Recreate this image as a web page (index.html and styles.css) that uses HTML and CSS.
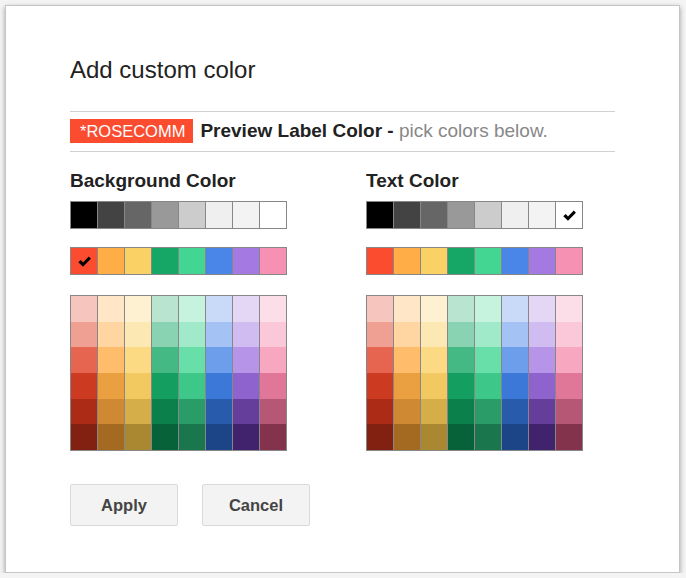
FILE: index.html
```html
<!DOCTYPE html>
<html lang="en">
<head>
    <meta charset="UTF-8">
    <title>Add custom color</title>
    <link rel="stylesheet" href="styles.css">
</head>
<body>
    <div class="dialog">
        <h1 class="title">Add custom color</h1>

        <div class="preview">
            <span class="chip">*ROSECOMM</span>
            <span class="preview-text"><b>Preview Label Color -</b> <span class="hint">pick colors below.</span></span>
        </div>

        <div class="pickers">
            <div class="picker">
                <h2 class="picker-title">Background Color</h2>
                <div class="swatches row">
                    <span style="background:#000000"></span>
                    <span style="background:#434343"></span>
                    <span style="background:#666666"></span>
                    <span style="background:#999999"></span>
                    <span style="background:#cccccc"></span>
                    <span style="background:#efefef"></span>
                    <span style="background:#f3f3f3"></span>
                    <span style="background:#ffffff"></span>
                </div>
                <div class="swatches row spaced">
                    <span class="checked" style="background:#fb4c2f"><svg viewBox="0 0 14 14"><path d="M1.2 7.8 L3.5 5.7 L5.6 8 L11 2.4 L13 4.4 L5.6 11.8 Z"/></svg></span>
                    <span style="background:#ffad47"></span>
                    <span style="background:#fad165"></span>
                    <span style="background:#16a766"></span>
                    <span style="background:#43d692"></span>
                    <span style="background:#4a86e8"></span>
                    <span style="background:#a479e2"></span>
                    <span style="background:#f691b3"></span>
                </div>
                <div class="swatches grid bg-grid"></div>
            </div>

            <div class="picker">
                <h2 class="picker-title">Text Color</h2>
                <div class="swatches row">
                    <span style="background:#000000"></span>
                    <span style="background:#434343"></span>
                    <span style="background:#666666"></span>
                    <span style="background:#999999"></span>
                    <span style="background:#cccccc"></span>
                    <span style="background:#efefef"></span>
                    <span style="background:#f3f3f3"></span>
                    <span class="checked" style="background:#ffffff"><svg viewBox="0 0 14 14"><path d="M1.2 7.8 L3.5 5.7 L5.6 8 L11 2.4 L13 4.4 L5.6 11.8 Z"/></svg></span>
                </div>
                <div class="swatches row spaced">
                    <span style="background:#fb4c2f"></span>
                    <span style="background:#ffad47"></span>
                    <span style="background:#fad165"></span>
                    <span style="background:#16a766"></span>
                    <span style="background:#43d692"></span>
                    <span style="background:#4a86e8"></span>
                    <span style="background:#a479e2"></span>
                    <span style="background:#f691b3"></span>
                </div>
                <div class="swatches grid text-grid"></div>
            </div>
        </div>

        <div class="actions">
            <button class="btn">Apply</button>
            <button class="btn">Cancel</button>
        </div>
    </div>

    <script>
        // label palette, row by row
        const palette = [
            '#f6c5be', '#ffe6c7', '#fef1d1', '#b9e4d0', '#c6f3de', '#c9daf8', '#e4d7f5', '#fcdee8',
            '#efa093', '#ffd6a2', '#fce8b3', '#89d3b2', '#a0eac9', '#a4c2f4', '#d0bcf1', '#fbc8d9',
            '#e66550', '#ffbc6b', '#fcda83', '#44b984', '#68dfa9', '#6d9eeb', '#b694e8', '#f7a7c0',
            '#cc3a21', '#eaa041', '#f2c960', '#149e60', '#3dc789', '#3c78d8', '#8e63ce', '#e07798',
            '#ac2b16', '#cf8933', '#d5ae49', '#0b804b', '#2a9c68', '#285bac', '#653e9b', '#b65775',
            '#822111', '#a46a21', '#aa8831', '#076239', '#1a764d', '#1c4587', '#41236d', '#83334c'
        ];

        document.querySelectorAll('.grid').forEach(grid => {
            palette.forEach(color => {
                const cell = document.createElement('span');
                cell.style.background = color;
                grid.appendChild(cell);
            });
        });
    </script>
</body>
</html>
```

FILE: styles.css
```css
body {
    margin: 0;
    background: #f4f4f4;
    font-family: "Liberation Sans", Arial, sans-serif;
}
.dialog {
    box-sizing: border-box;
    width: 675px;
    height: 568px;
    margin: 5px 0 0 5px;
    padding: 50px 64px 0;
    background: #fff;
    border: 1px solid #c6c6c6;
    box-shadow: 0 2px 5px rgba(0,0,0,0.35);
}
.title {
    margin: 0;
    font-size: 24px;
    font-weight: normal;
    line-height: 28px;
    color: #222;
}
.preview {
    display: flex;
    align-items: center;
    width: 545px;
    height: 38px;
    margin-top: 27px;
    border-top: 1px solid #d0d0d0;
    border-bottom: 1px solid #d0d0d0;
    padding-bottom: 1px;
}
.chip {
    height: 24px;
    line-height: 24px;
    padding: 0 8px 0 10px;
    background: #fb4c2f;
    color: #fff;
    font-size: 16.5px;
}
.preview-text {
    margin-left: 7px;
    font-size: 19px;
    color: #222;
}
.hint {
    color: #888;
}
.pickers {
    display: flex;
    gap: 79px;
    margin-top: 18px;
}
.picker {
    width: 217px;
}
.picker-title {
    margin: 0 0 9px;
    font-size: 19px;
    line-height: 22px;
    color: #222;
}
.swatches {
    display: grid;
    grid-template-columns: repeat(8, 26px);
    column-gap: 1px;
    background: #878787;
    border: 1px solid #878787;
    width: max-content;
}
.swatches span {
    display: flex;
    align-items: center;
    justify-content: center;
}
.row span {
    height: 26px;
}
.spaced {
    margin-top: 18px;
}
.grid {
    margin-top: 20px;
}
.grid span {
    height: 25.7px;
}
.checked svg {
    width: 15px;
    height: 15px;
    fill: #000;
}
.actions {
    display: flex;
    gap: 24px;
    margin-top: 33px;
}
.btn {
    width: 108px;
    height: 42px;
    background: #f3f3f3;
    border: 1px solid #dadada;
    border-radius: 2px;
    color: #444;
    font-family: "Liberation Sans", Arial, sans-serif;
    font-size: 16.5px;
    font-weight: bold;
    cursor: pointer;
}
```
